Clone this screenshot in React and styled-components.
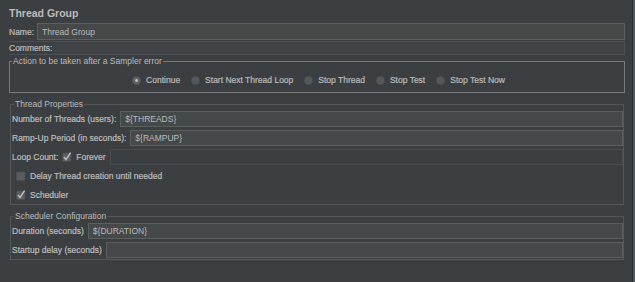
import React from "react";
import styled, { createGlobalStyle } from "styled-components";

const GlobalStyle = createGlobalStyle`
  html, body {
    margin: 0;
    background: #3c3f41;
  }
  body {
    font-family: "Liberation Sans", Arial, sans-serif;
    font-size: 8.5px;
    color: #bbbbbb;
  }
`;

const Frame = styled.div`
  display: flex;
  width: 635px;
  height: 282px;
  background: #3c3f41;
  overflow: hidden;
`;

const Main = styled.div`
  width: 632px;
  box-sizing: border-box;
  padding: 0 7px 0 9px;
  display: flex;
  flex-direction: column;
`;

const SideStrip = styled.div`
  flex: 1;
  border-left: 1px solid #2b2d2e;
  background: #4b5b64;
`;

const Title = styled.div`
  height: 23px;
  box-sizing: border-box;
  padding-top: 3px;
  line-height: 20px;
  font-size: 10.5px;
  font-weight: bold;
  color: #bbbbbb;
`;

const Row = styled.div`
  display: flex;
  align-items: center;
  height: ${(p) => p.$h || 16}px;
  gap: ${(p) => p.$gap || 4}px;
  padding-left: ${(p) => p.$indent || 0}px;
`;

const Label = styled.span`
  white-space: nowrap;
  color: #bdbdbd;
  -webkit-text-stroke: 0.2px #bdbdbd;
`;

const TextField = styled.input`
  flex: 1;
  min-width: 0;
  height: 100%;
  box-sizing: border-box;
  margin: 0 0 0 ${(p) => p.$shift || 0}px;
  padding: 0 4px;
  font: inherit;
  color: #bbbbbb;
  background: ${(p) => (p.disabled ? "#3c3f41" : "#46494a")};
  border: 1px solid ${(p) => (p.disabled ? "#4b4e50" : "#5c5f60")};
  border-radius: 0;
  outline: none;
`;

const CommentsRow = styled.div`
  display: flex;
  align-items: stretch;
  height: 14px;
  box-sizing: border-box;
  margin-top: 1px;
  border-top: 1px solid #4d5052;
  border-bottom: 1px solid #4d5052;
  line-height: 12px;
`;

const CommentsArea = styled.div`
  flex: 1;
  background: #404345;
  border-right: 1px solid #4d5052;
`;

const Group = styled.fieldset`
  margin: ${(p) => p.$top}px ${(p) => (p.$inset ? 1 : 0)}px 0;
  padding: ${(p) => p.$pad};
  border: 1px solid ${(p) => (p.$bright ? "#787878" : "#555859")};
  min-inline-size: 0;
  display: flex;
  flex-direction: column;
  gap: ${(p) => p.$gap || 0}px;
`;

const Legend = styled.legend`
  margin-left: 2px;
  padding: 0 1px;
  line-height: 10px;
  color: #bbbbbb;
`;

const RadioRow = styled.div`
  display: flex;
  justify-content: center;
  align-items: center;
  gap: 11px;
  height: 12px;
  padding-left: 3px;
`;

const RadioItem = styled.label`
  display: flex;
  align-items: center;
  gap: 5px;
  white-space: nowrap;
  -webkit-text-stroke: 0.2px #bbbbbb;
`;

function Radio({ checked }) {
  return (
    <svg width="9" height="9" viewBox="0 0 9 9">
      <circle cx="4.5" cy="4.5" r="4.3" fill={checked ? "#5d6062" : "#55585a"} stroke="#4c4f51" strokeWidth="0.4" />
      {checked && <circle cx="4.5" cy="4.5" r="1.4" fill="#c8c8c8" />}
    </svg>
  );
}

function Checkbox({ checked }) {
  return (
    <svg width="10" height="10" viewBox="0 0 10 10" style={{ overflow: "visible", flex: "none" }}>
      <rect x="0.5" y="1" width="8.5" height="8.5" rx="1" fill="#5a5d5f" stroke="#4e5153" strokeWidth="0.6" />
      {checked && <polyline points="2,5 4,7.6 8.6,0.6" fill="none" stroke="#c2c2c2" strokeWidth="1.4" />}
    </svg>
  );
}

const actions = ["Continue", "Start Next Thread Loop", "Stop Thread", "Stop Test", "Stop Test Now"];

export default function App() {
  return (
    <>
      <GlobalStyle />
      <Frame>
        <Main>
          <Title>Thread Group</Title>
          <Row $h={17} $gap={3}>
            <Label>Name:</Label>
            <TextField readOnly defaultValue="Thread Group" />
          </Row>
          <CommentsRow>
            <Label>Comments:</Label>
            <CommentsArea />
          </CommentsRow>

          <Group $top={1} $bright $pad="8px 0 6px">
            <Legend>Action to be taken after a Sampler error</Legend>
            <RadioRow>
              {actions.map((a, i) => (
                <RadioItem key={a}>
                  <Radio checked={i === 0} />
                  {a}
                </RadioItem>
              ))}
            </RadioRow>
          </Group>

          <Group $top={6} $inset $gap={3} $pad="2px 0 1px 1px">
            <Legend>Thread Properties</Legend>
            <Row>
              <Label>Number of Threads (users):</Label>
              <TextField readOnly defaultValue="${THREADS}" />
            </Row>
            <Row>
              <Label>Ramp-Up Period (in seconds):</Label>
              <TextField readOnly defaultValue="${RAMPUP}" />
            </Row>
            <Row $gap={4}>
              <Label>Loop Count:</Label>
              <Checkbox checked />
              <Label>Forever</Label>
              <TextField readOnly disabled defaultValue="" />
            </Row>
            <Row $indent={4}>
              <Checkbox />
              <Label>Delay Thread creation until needed</Label>
            </Row>
            <Row $indent={4}>
              <Checkbox checked />
              <Label>Scheduler</Label>
            </Row>
          </Group>

          <Group $top={6} $inset $gap={3} $pad="2px 0 1px 1px">
            <Legend>Scheduler Configuration</Legend>
            <Row>
              <Label>Duration (seconds)</Label>
              <TextField readOnly defaultValue="${DURATION}" />
            </Row>
            <Row>
              <Label>Startup delay (seconds)</Label>
              <TextField readOnly defaultValue="" />
            </Row>
          </Group>
        </Main>
        <SideStrip />
      </Frame>
    </>
  );
}
